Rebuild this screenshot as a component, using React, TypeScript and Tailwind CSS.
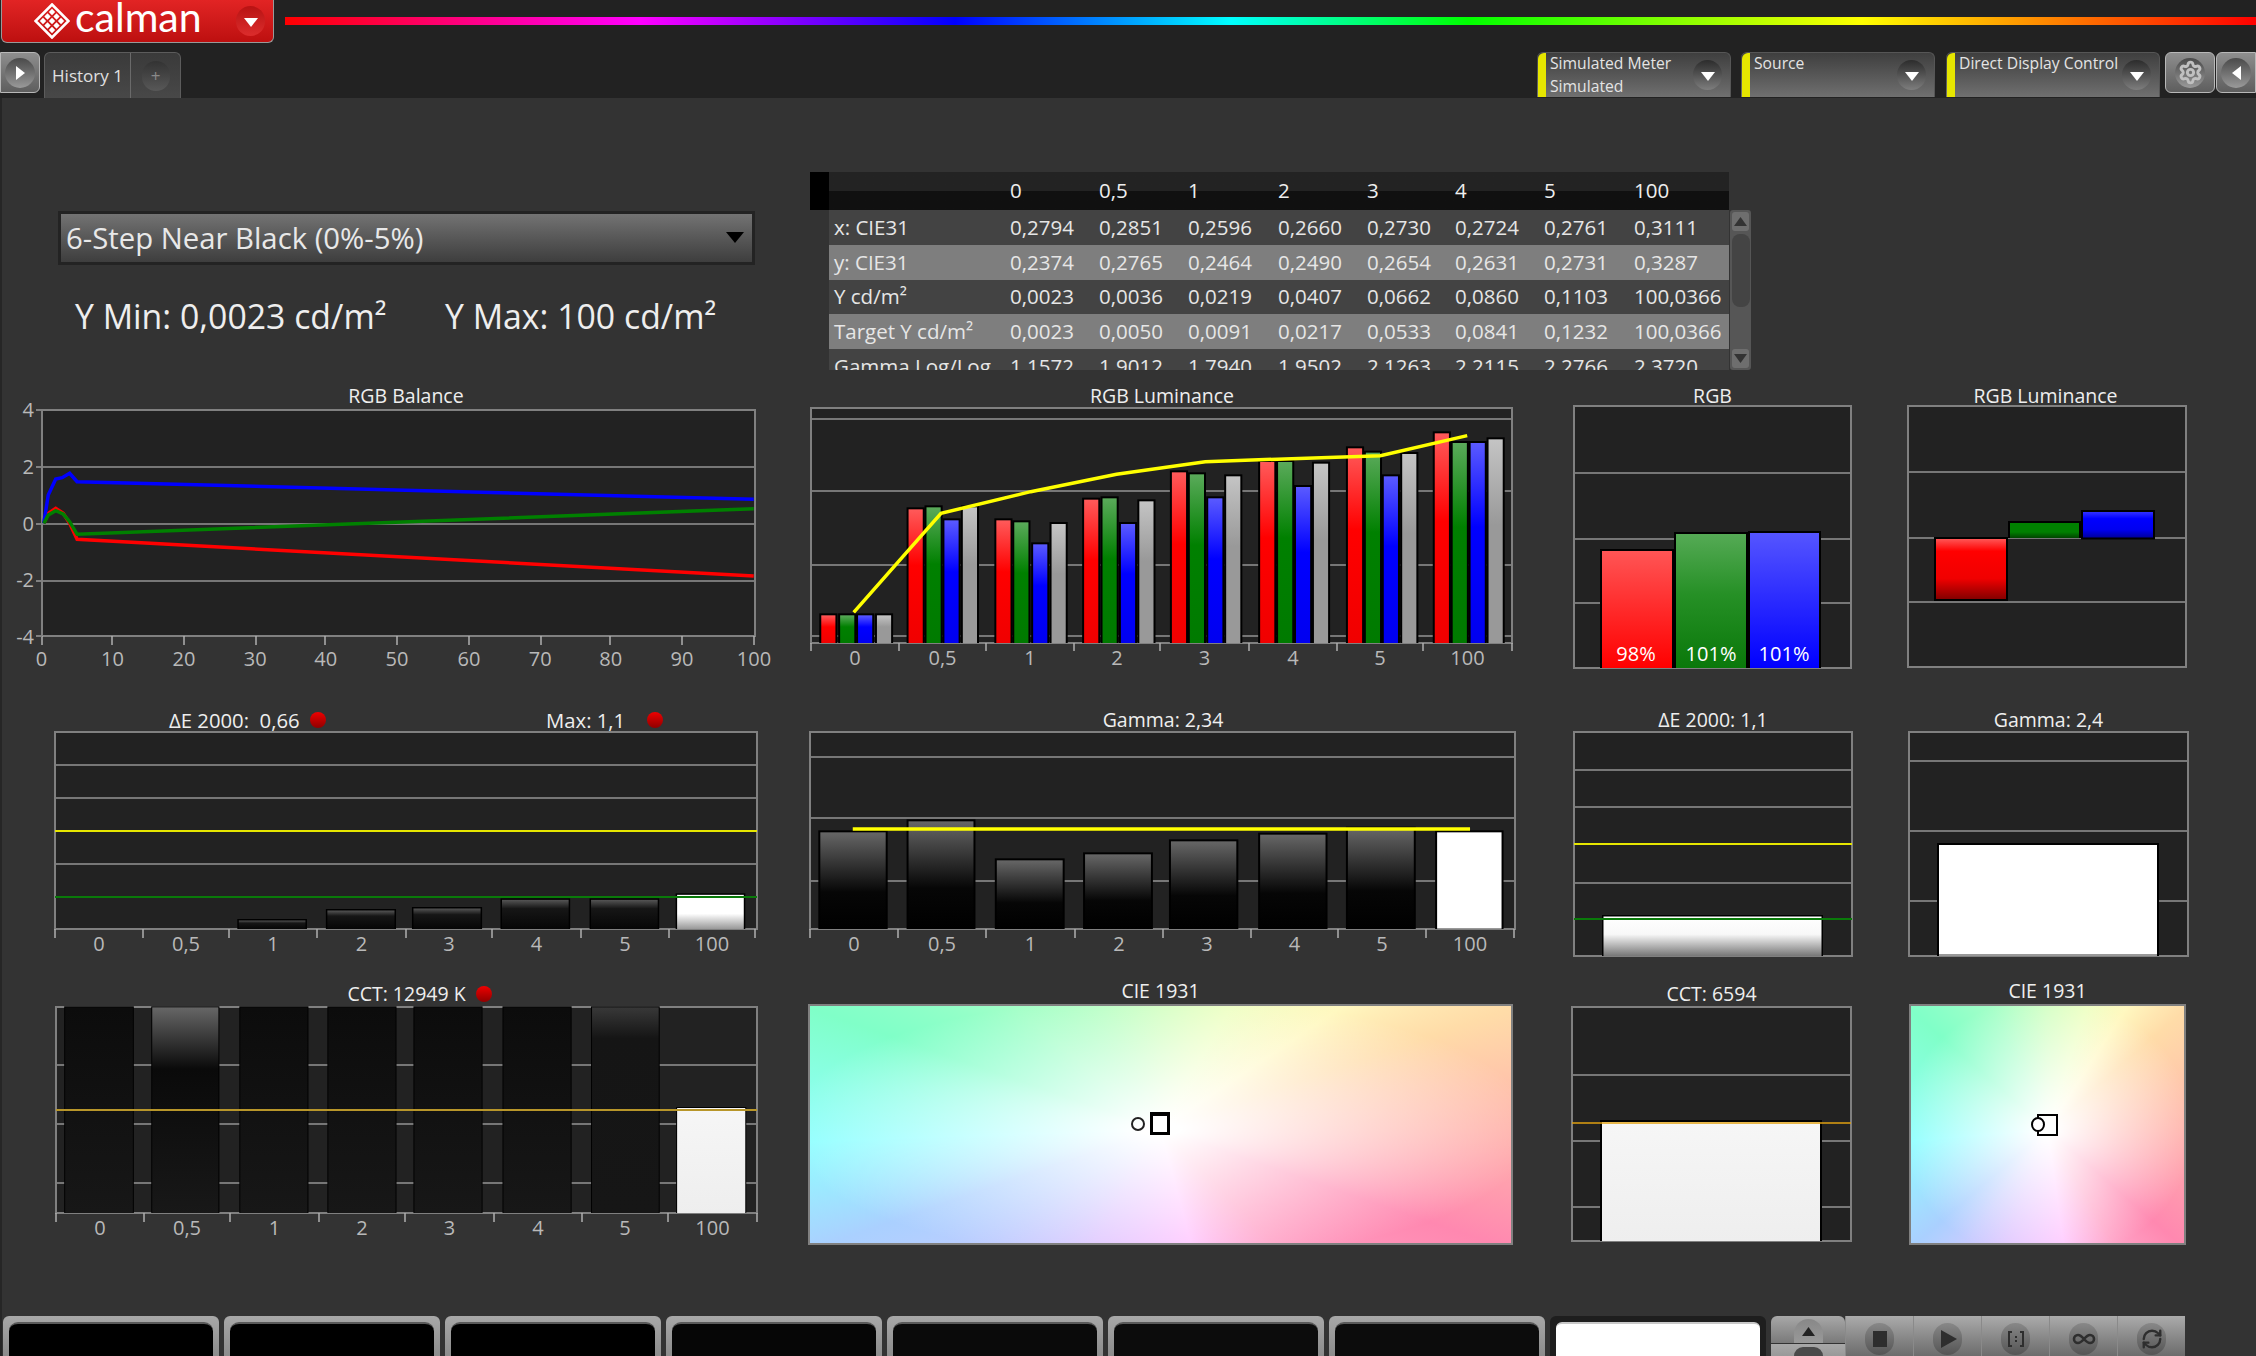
import React from "react";
import { Infinity as InfinityIcon, RefreshCw, Settings } from "lucide-react";

type Bar = [number, number, number, string];

const pts = (a: number[][]) => a.map((p) => p.join(",")).join(" ");

function Defs() {
  const g = (id: string, stops: [number, string][]) => (
    <linearGradient id={id} x1="0" y1="0" x2="0" y2="1" key={id}>
      {stops.map(([o, c], i) => (
        <stop key={i} offset={o} stopColor={c} />
      ))}
    </linearGradient>
  );
  return (
    <svg width="0" height="0" className="absolute">
      <defs>
        {g("r", [[0, "#ff5a5a"], [0.42, "#ff0000"], [1, "#f00000"]])}
        {g("g", [[0, "#5aaa5a"], [0.42, "#008000"], [1, "#007a00"]])}
        {g("b", [[0, "#5a5aff"], [0.42, "#0000ff"], [1, "#0000f0"]])}
        {g("w", [[0, "#c4c4c4"], [0.42, "#999999"], [1, "#999999"]])}
        {g("r3", [[0, "#ff5555"], [0.5, "#ff2a2a"], [1, "#ff0000"]])}
        {g("g3", [[0, "#55aa55"], [0.45, "#269026"], [1, "#0a780a"]])}
        {g("b3", [[0, "#5555ff"], [0.5, "#2a2aff"], [1, "#0000ff"]])}
        {g("rS", [[0, "#ff5555"], [0.2, "#ff0000"], [0.65, "#f00000"], [1, "#800000"]])}
        {g("gS", [[0, "#008000"], [0.6, "#008000"], [1, "#004400"]])}
        {g("bS", [[0, "#3030ff"], [0.25, "#0000ff"], [0.65, "#0000f0"], [1, "#000090"]])}
        {g("kA", [[0, "#555555"], [0.3, "#161616"], [1, "#060606"]])}
        {g("kB", [[0, "#666666"], [0.62, "#060606"], [1, "#000000"]])}
        {g("kC", [[0, "#0c0c0c"], [1, "#171717"]])}
        {g("kD", [[0, "#666666"], [0.3, "#0a0a0a"], [1, "#181818"]])}
        {g("kE", [[0, "#383838"], [0.15, "#151515"], [1, "#161616"]])}
        {g("wA", [[0, "#ffffff"], [0.55, "#ffffff"], [1, "#999999"]])}
        {g("wB", [[0, "#ffffff"], [0.45, "#f8f8f8"], [1, "#777777"]])}
        {g("wC", [[0, "#f6f6f6"], [1, "#eeeeee"]])}
        {g("wW", [[0, "#ffffff"], [0.985, "#ffffff"], [0.985, "#999999"], [1, "#999999"]])}
      </defs>
    </svg>
  );
}

function Frame({ x1, y1, x2, y2, grid = [], ticks = [], tb = 0 }: { x1: number; y1: number; x2: number; y2: number; grid?: number[]; ticks?: number[]; tb?: number }) {
  return (
    <g>
      <rect x={x1} y={y1} width={x2 - x1} height={y2 - y1} fill="#222222" />
      {grid.map((y) => (
        <line key={y} x1={x1} x2={x2} y1={y} y2={y} stroke="#777777" strokeWidth="2" />
      ))}
      <rect x={x1} y={y1} width={x2 - x1} height={y2 - y1} fill="none" stroke="#808080" strokeWidth="2" />
      {ticks.map((x) => (
        <line key={x} x1={x} x2={x} y1={y2} y2={tb} stroke="#b0b0b0" strokeWidth="1.5" />
      ))}
    </g>
  );
}

function Bars({ data, bottom, b = 2 }: { data: Bar[]; bottom: number; b?: number }) {
  return (
    <g>
      {data.map(([x1, x2, top, fill], i) => (
        <g key={i}>
          <rect x={x1} y={top} width={x2 - x1} height={bottom - top} fill="#000" />
          <rect x={x1 + b} y={top + b} width={x2 - x1 - 2 * b} height={Math.max(0, bottom - top - b)} fill={`url(#${fill})`} />
        </g>
      ))}
    </g>
  );
}

function Chart({
  title, x0, y0, w, h, ticks, labels, className = "", titleClass = "", labelClass = "-mt-[6px]", children,
}: {
  title: React.ReactNode; x0: number; y0: number; w: number; h: number; ticks?: number[]; labels?: string[];
  className?: string; titleClass?: string; labelClass?: string; children: React.ReactNode;
}) {
  const cells: { w: number; t: string }[] = [];
  let first = 0;
  if (ticks && labels) {
    if (ticks.length === labels.length + 1) {
      labels.forEach((t, i) => cells.push({ w: ticks[i + 1] - ticks[i], t }));
      first = ticks[0] - x0;
    } else {
      labels.forEach((t, i) => {
        const l = i === 0 ? ticks[0] - 36 : (ticks[i - 1] + ticks[i]) / 2;
        const r = i === labels.length - 1 ? ticks[i] + 36 : (ticks[i] + ticks[i + 1]) / 2;
        cells.push({ w: r - l, t });
      });
      first = ticks[0] - 36 - x0;
    }
  }
  return (
    <div className={`shrink-0 ${className}`} style={{ width: w }}>
      <div className={`flex items-center justify-center whitespace-pre text-[19.5px] leading-none text-[#eeeeee] ${titleClass}`}>{title}</div>
      <svg width={w} height={h} viewBox={`${x0} ${y0} ${w} ${h}`} className="block overflow-visible">
        {children}
      </svg>
      {cells.length > 0 && (
        <div className={`flex h-[24px] items-center text-[20px] leading-none text-[#b9b9b9] ${labelClass}`} style={{ marginLeft: first }}>
          {cells.map((c, i) => (
            <div key={i} className="flex shrink-0 justify-center" style={{ width: c.w }}>
              {c.t}
            </div>
          ))}
        </div>
      )}
    </div>
  );
}

const Tri = ({ className = "", dir = "down", color = "#fff" }: { className?: string; dir?: "down" | "up" | "left" | "right"; color?: string }) => {
  const p = { down: "0,0 14,0 7,9", up: "0,9 14,9 7,0", left: "14,0 14,14 0,7", right: "0,0 0,14 14,7" }[dir];
  const vb = dir === "down" || dir === "up" ? "0 0 14 9" : "0 0 14 14";
  return (
    <svg viewBox={vb} preserveAspectRatio="none" className={className}>
      <polygon points={p} fill={color} />
    </svg>
  );
};

const Knob = ({ className = "" }: { className?: string }) => (
  <div className={`flex h-[30px] w-[29px] shrink-0 items-center justify-center rounded-full bg-linear-to-b from-[#2c2c2c] to-[#7e7e7e] ${className}`}>
    <Tri className="mt-[2px] h-[9px] w-[14px]" />
  </div>
);

const Dot = ({ className = "" }: { className?: string }) => (
  <span className={`inline-block h-[16px] w-[16px] rounded-full bg-linear-to-b from-[#f00000] to-[#900000] ${className}`} />
);

function Logo() {
  const d = [[18, 9], [9, 18], [27, 18], [18, 27], [13.5, 13.5], [22.5, 13.5], [13.5, 22.5], [22.5, 22.5], [18, 18]];
  return (
    <svg viewBox="0 0 36 36" className="h-[36px] w-[36px] shrink-0">
      <polygon points="18,1.5 34.5,18 18,34.5 1.5,18" fill="none" stroke="#fff" strokeWidth="2.6" />
      {d.map(([x, y], i) => (
        <polygon key={i} points={`${x},${y - 3.2} ${x + 3.2},${y} ${x},${y + 3.2} ${x - 3.2},${y}`} fill="#fff" />
      ))}
    </svg>
  );
}

function InputBox({ l1, l2, className }: { l1: string; l2?: string; className: string }) {
  return (
    <div className={`flex h-[45px] shrink-0 overflow-hidden rounded-t-[6px] border-t border-r border-[#565656] bg-linear-to-b from-[#3f3f3f] to-[#707070] ${className}`}>
      <div className="ml-[1px] w-[8px] shrink-0 rounded-tl-[6px] bg-[#e6e600]" />
      <div className="-mt-[1px] flex min-w-0 flex-1 flex-col whitespace-nowrap pl-[4px] text-[15.7px] leading-[22.5px] text-[#e4e4e4]">
        <span>{l1}</span>
        {l2 && <span>{l2}</span>}
      </div>
      <Knob className="mt-[7px] mr-[8px]" />
    </div>
  );
}

const SideBtn = ({ className, children }: { className: string; children: React.ReactNode }) => (
  <div className={`flex h-[41px] shrink-0 items-center justify-center border border-[#b8b8b8] bg-linear-to-b from-[#8e8e8e] to-[#5e5e5e] ${className}`}>
    <div className="flex h-[30px] w-[30px] items-center justify-center rounded-full bg-linear-to-b from-[#4a4a4a] to-[#9a9a9a]">{children}</div>
  </div>
);

const head = ["0", "0,5", "1", "2", "3", "4", "5", "100"];
const rows: { l: string; v: string[]; light: boolean }[] = [
  { l: "x: CIE31", v: ["0,2794", "0,2851", "0,2596", "0,2660", "0,2730", "0,2724", "0,2761", "0,3111"], light: false },
  { l: "y: CIE31", v: ["0,2374", "0,2765", "0,2464", "0,2490", "0,2654", "0,2631", "0,2731", "0,3287"], light: true },
  { l: "Y cd/m²", v: ["0,0023", "0,0036", "0,0219", "0,0407", "0,0662", "0,0860", "0,1103", "100,0366"], light: false },
  { l: "Target Y cd/m²", v: ["0,0023", "0,0050", "0,0091", "0,0217", "0,0533", "0,0841", "0,1232", "100,0366"], light: true },
  { l: "Gamma Log/Log", v: ["1,1572", "1,9012", "1,7940", "1,9502", "2,1263", "2,2115", "2,2766", "2,3720"], light: false },
];
const tableCols = "grid grid-cols-[181px_89px_89px_90px_89px_88px_89px_90px_95px]";

function DataTable() {
  return (
    <div className="ml-[53px] mt-[74px] w-[941px] shrink-0">
      <div className="flex h-[38px] w-[919px]">
        <div className="w-[19px] shrink-0 bg-black" />
        <div className={`flex-1 items-center bg-linear-to-b from-[#232323] from-50% to-[#101010] to-50% pb-[1px] text-[20.5px] text-[#eeeeee] ${tableCols}`}>
          <span />
          {head.map((h) => (
            <span key={h}>{h}</span>
          ))}
        </div>
      </div>
      <div className="flex h-[160px]">
        <div className="ml-[19px] w-[900px] shrink-0 overflow-hidden">
          {rows.map((r) => (
            <div key={r.l} className={`h-[34.75px] items-center whitespace-nowrap pb-[1px] text-[20.5px] leading-[28px] text-[#e6e6e6] ${tableCols} ${r.light ? "bg-[#7e7e7e]" : "bg-[#434343]"}`}>
              <span className="pl-[5px]">{r.l}</span>
              {r.v.map((v, i) => (
                <span key={i}>{v}</span>
              ))}
            </div>
          ))}
        </div>
        <div className="ml-[1px] flex w-[21px] flex-col items-center rounded-[3px] bg-[#565656] py-[2px]">
          <div className="flex h-[19px] w-[17px] items-center justify-center rounded-[3px] bg-[#6e6e6e]">
            <Tri dir="up" color="#333" className="h-[9px] w-[13px]" />
          </div>
          <div className="mt-[3px] h-[73px] w-[18px] rounded-[8px] bg-[#444444]" />
          <div className="mt-auto flex h-[19px] w-[17px] items-center justify-center rounded-[3px] bg-[#6e6e6e]">
            <Tri dir="down" color="#333" className="h-[9px] w-[13px]" />
          </div>
        </div>
      </div>
    </div>
  );
}

const cieBig =
  "bg-[radial-gradient(ellipse_at_50%_52%,#ffffff_0%,#ffffff_4%,rgba(255,255,255,0)_76%),conic-gradient(from_0deg_at_50%_52%,#d4ffc4_0deg,#eeffc4_30deg,#fff8c0_56deg,#ffdca8_71deg,#ffb4ac_90deg,#ff88b0_109deg,#ffa4c8_135deg,#ffc8ff_165deg,#e0c8ff_210deg,#c8ccff_230deg,#aad0ff_251deg,#90ffff_268deg,#88ffe0_280deg,#80ffc8_289deg,#a4ffc8_310deg,#d4ffc4_360deg)]";
const cieSmall =
  "bg-[radial-gradient(ellipse_at_50%_52%,#ffffff_0%,#ffffff_4%,rgba(255,255,255,0)_76%),conic-gradient(from_0deg_at_50%_52%,#d4ffc4_0deg,#eeffc4_18deg,#fff8c0_33deg,#ffdca8_49deg,#ffb4ac_90deg,#ff88b0_131deg,#ffa4c8_150deg,#ffc8ff_172deg,#e0c8ff_200deg,#c8ccff_215deg,#aad0ff_229deg,#90ffff_265deg,#88ffe0_290deg,#80ffc8_311deg,#a4ffc8_335deg,#d4ffc4_360deg)]";

function Cie({ className, big }: { className: string; big: boolean }) {
  const w = big ? 705 : 277;
  const x0 = big ? 808 : 1909;
  return (
    <div className={`shrink-0 ${className}`}>
      <div className="flex h-[20px] items-center justify-center pb-[6px] text-[19.5px] leading-none text-[#eeeeee]">CIE 1931</div>
      <div className={`relative h-[241px] border-2 border-[#808080] ${big ? cieBig : cieSmall}`}>
        <svg width={w} height={241} viewBox={`${x0} 1005 ${w} 241`} className="absolute -left-[2px] -top-[2px]">
          {big ? (
            <g>
              <circle cx="1138" cy="1125" r="6" fill="none" stroke="#222" strokeWidth="2" />
              <rect x="1151.5" y="1114.5" width="17" height="20" fill="#fff" stroke="#000" strokeWidth="3" />
              <rect x="1150" y="1113" width="20" height="4" fill="#000" />
            </g>
          ) : (
            <g>
              <rect x="2038" y="1116" width="19" height="20" fill="none" stroke="#000" strokeWidth="2" />
              <ellipse cx="2038" cy="1125.5" rx="6" ry="6.5" fill="#fff" stroke="#000" strokeWidth="2" />
            </g>
          )}
        </svg>
      </div>
    </div>
  );
}

const TopTile = ({ fill }: { fill: string }) => (
  <div className="h-full w-[216px] shrink-0 rounded-t-[6px] bg-linear-to-b from-[#a8a8a8] to-[#8c8c8c] px-[6px] pt-[6px]">
    <div className={`h-full rounded-t-[9px] border-t-2 border-[#5a5a5a] ${fill}`} />
  </div>
);

const Ctl = ({ children }: { children: React.ReactNode }) => (
  <div className="flex h-full w-[68px] shrink-0 items-start justify-center border-l border-[#8a8a8a] bg-linear-to-b from-[#ababab] to-[#6c6c6c] pt-[7px]">
    <div className="flex h-[32px] w-[29px] items-center justify-center rounded-full bg-linear-to-b from-[#888888] to-[#555555]">{children}</div>
  </div>
);

export default function App() {
  // chart 1 coordinates, read from the reference
  const bx = (z: number) => z / 2.01;
  const by = (z: number) => 380 + z / 3;
  const line = (a: number[][]) => pts(a.map(([x, y]) => [bx(x), by(y)]));

  // chart 2
  const lx = (z: number) => 790 + z / 2.119;
  const lumGroups: [number, number][][] = [
    [[62, 700], [102, 700], [140, 700], [180, 700]],
    [[247, 382], [285, 376], [323, 415], [362, 376]],
    [[433, 415], [471, 421], [511, 487], [550, 426]],
    [[619, 353], [658, 349], [697, 426], [736, 358]],
    [[805, 271], [843, 277], [882, 349], [920, 283]],
    [[992, 240], [1030, 240], [1068, 315], [1106, 245]],
    [[1178, 199], [1216, 212], [1254, 283], [1293, 216]],
    [[1362, 154], [1400, 183], [1438, 183], [1476, 172]],
  ];
  const fills = ["r", "g", "b", "w"];
  const lumBars: Bar[] = lumGroups.flatMap((gr) =>
    gr.map(([x, t], i) => [lx(x), lx(x + 38.5), by(t), fills[i]] as Bar),
  );
  const lumLine = [[135, 697], [320, 400], [510, 335], [692, 283], [880, 245], [1063, 236], [1251, 227], [1435, 167]];

  const cols8 = ["0", "0,5", "1", "2", "3", "4", "5", "100"];

  // row 2, first chart
  const dy = (z: number) => 700 + z / 3;
  const deBars: Bar[] = [
    [477, 617, 657, "kA"],
    [655, 796, 627, "kA"],
    [828, 969, 621, "kA"],
    [1006, 1146, 595, "kA"],
    [1185, 1325, 595, "kA"],
    [1358, 1498, 580, "wA"],
  ].map(([a, b, t, f]) => [bx(a as number), bx(b as number), dy(t as number), f as string] as Bar);

  const gaBars: Bar[] = [
    [60, 207, 391, "kB"],
    [247, 393, 358, "kB"],
    [434, 582, 475, "kB"],
    [621, 769, 457, "kB"],
    [803, 950, 418, "kB"],
    [992, 1139, 398, "kB"],
    [1178, 1326, 380, "kB"],
    [1367, 1512, 391, "wW"],
  ].map(([a, b, t, f]) => [lx(a as number), lx(b as number), dy(t as number), f as string] as Bar);

  const cy = (z: number) => 970 + z / 3;
  const cctBars: Bar[] = [
    [129, 269, 112, "kC"],
    [304, 441, 112, "kD"],
    [481, 620, 112, "kC"],
    [658, 797, 112, "kC"],
    [831, 970, 112, "kC"],
    [1010, 1149, 112, "kC"],
    [1188, 1326, 112, "kE"],
    [1359, 1500, 414, "wC"],
  ].map(([a, b, t, f]) => [bx(a as number), bx(b as number), cy(t as number), f as string] as Bar);

  return (
    <div className="h-[1356px] w-[2256px] overflow-hidden bg-[#222222] font-['Open_Sans',sans-serif]">
      <Defs />
      {/* title bar */}
      <div className="flex h-[43px] items-start">
        <div className="ml-[1px] flex h-[43px] w-[273px] shrink-0 items-center rounded-b-[6px] border-b border-x border-[#999999] bg-linear-to-b from-[#e22424] to-[#bd0f0f] pl-[32px]">
          <Logo />
          <span className="mb-[10px] ml-[5px] w-[130px] shrink-0 font-['Lato',sans-serif] text-[41px] font-normal leading-none text-white">calman</span>
          <div className="ml-[31px] flex h-[30px] w-[29px] shrink-0 items-center justify-center rounded-full bg-linear-to-b from-[#b81212] to-[#dc2c2c]">
            <Tri className="mt-[2px] h-[9px] w-[14px]" />
          </div>
        </div>
        <div className="ml-[11px] mt-[17px] h-[8px] flex-1 bg-[linear-gradient(90deg,#ff0000_0%,#ff00ff_18%,#0000ff_34%,#00ffff_48%,#00ff00_60%,#ffff00_80%,#ff0000_100%)]" />
      </div>

      {/* tabs and inputs */}
      <div className="mt-[9px] flex h-[46px] items-start">
        <SideBtn className="w-[40px] rounded-r-[6px]">
          <Tri dir="right" className="h-[14px] w-[9px]" />
        </SideBtn>
        <div className="ml-[4px] flex h-[46px] w-[137px] shrink-0 overflow-hidden rounded-t-[6px] border-x border-t border-[#5c5c5c] bg-linear-to-b from-[#3a3a3a] to-[#484848]">
          <div className="flex w-[86px] shrink-0 items-center justify-center border-r border-[#6a6a6a] text-[17px] leading-none text-[#e0e0e0]">History 1</div>
          <div className="flex flex-1 items-center justify-center">
            <div className="flex h-[30px] w-[28px] items-center justify-center rounded-full bg-linear-to-b from-[#333333] to-[#585858] text-[17px] leading-none text-[#8a8a8a]">+</div>
          </div>
        </div>
        <div className="flex-1" />
        <InputBox l1="Simulated Meter" l2="Simulated" className="w-[194px]" />
        <InputBox l1="Source" className="ml-[10px] w-[194px]" />
        <InputBox l1="Direct Display Control" className="ml-[11px] w-[214px]" />
        <SideBtn className="ml-[5px] w-[50px] rounded-[6px]">
          <Settings size={25} color="#c0c0c0" strokeWidth={2.8} />
        </SideBtn>
        <SideBtn className="ml-[1px] w-[40px] rounded-l-[6px]">
          <Tri dir="left" className="h-[14px] w-[9px]" />
        </SideBtn>
      </div>

      {/* workspace */}
      <div className="mt-[0px] flex h-[1258px] flex-col bg-[#333333] text-[#eeeeee] shadow-[inset_2px_0_0_#262626]">
        {/* selector and table */}
        <div className="flex h-[287px] shrink-0 items-start">
          <div className="mt-[113px] w-[757px] shrink-0 pl-[58px]">
            <div className="flex h-[54px] w-[697px] items-center justify-between border-[3px] border-[#232323] bg-linear-to-b from-[#737373] to-[#3e3e3e] pl-[5px] pr-[8px] pt-[1px] text-[29.3px] leading-none text-[#e8e8e8]">
              <span>6-Step Near Black (0%-5%)</span>
              <Tri color="#000" className="mb-[3px] h-[11px] w-[18px]" />
            </div>
            <div className="mt-[30px] flex h-[44px] items-center text-[33.8px] leading-none text-[#eeeeee]">
              <span className="ml-[17px] w-[370px] whitespace-nowrap">Y Min: 0,0023 cd/m²</span>
              <span className="whitespace-nowrap">Y Max: 100 cd/m²</span>
            </div>
          </div>
          <DataTable />
        </div>

        {/* first row */}
        <div className="flex h-[324px] shrink-0 items-start">
          <div className="mt-[13px] flex h-[251px] w-[40px] shrink-0 flex-col justify-between pr-[6px] text-right text-[20px] leading-[24px] text-[#b9b9b9]">
            <span>4</span>
            <span>2</span>
            <span>0</span>
            <span>-2</span>
            <span>-4</span>
          </div>
          <Chart
            title="RGB Balance"
            titleClass="h-[21px] pl-[14px]"
            labelClass="mt-0"
            x0={40}
            y0={406}
            w={718}
            h={241}
            ticks={[42, 112, 184, 256, 325, 397, 469, 541, 610, 682, 754]}
            labels={["0", "10", "20", "30", "40", "50", "60", "70", "80", "90", "100"]}
          >
            <Frame x1={42} y1={410} x2={755} y2={636} grid={[467, 524, 581]} ticks={[42, 112, 184, 256, 325, 397, 469, 541, 610, 682, 754]} tb={645} />
            {[410, 467, 524, 581, 636].map((y) => (
              <line key={y} x1={36} x2={42} y1={y} y2={y} stroke="#808080" strokeWidth="2" />
            ))}
            <polyline fill="none" stroke="#ff0000" strokeWidth="3.5" points={line([[88, 430], [97, 400], [112, 385], [127, 400], [140, 430], [155, 478], [1515, 588]])} />
            <polyline fill="none" stroke="#0000ff" strokeWidth="3.5" points={line([[88, 430], [97, 345], [112, 297], [125, 293], [140, 280], [155, 305], [1515, 358]])} />
            <polyline fill="none" stroke="#008000" strokeWidth="3.5" points={line([[88, 430], [97, 405], [112, 392], [127, 402], [140, 425], [155, 463], [1515, 386]])} />
          </Chart>
          <Chart
            title="RGB Luminance"
            titleClass="h-[21px]"
            className="ml-[50px]"
            x0={808}
            y0={406}
            w={708}
            h={246}
            ticks={[811, 899, 986, 1074, 1160, 1249, 1337, 1423, 1512]}
            labels={cols8}
          >
            <Frame x1={811} y1={408} x2={1512} y2={643} grid={[419, 491, 565, 636]} ticks={[811, 899, 986, 1074, 1160, 1249, 1337, 1423, 1512]} tb={651} />
            <Bars data={lumBars} bottom={643} />
            <polyline fill="none" stroke="#ffff00" strokeWidth="3.5" points={pts(lumLine.map(([x, y]) => [lx(x), by(y)]))} />
          </Chart>
          <Chart title="RGB" titleClass="h-[21px]" className="ml-[56px]" x0={1572} y0={406} w={281} h={264}>
            <Frame x1={1574} y1={406} x2={1851} y2={668} grid={[473, 539, 603]} />
            <Bars data={[[1600, 1674, 549, "r3"], [1674, 1748, 532, "g3"], [1748, 1821, 531, "b3"]]} bottom={668} />
            <text x="1636" y="661" textAnchor="middle" fontSize="20" fill="#ffffff">98%</text>
            <text x="1711" y="661" textAnchor="middle" fontSize="20" fill="#ffffff">101%</text>
            <text x="1784" y="661" textAnchor="middle" fontSize="20" fill="#ffffff">101%</text>
          </Chart>
          <Chart title="RGB Luminance" titleClass="h-[21px] pr-[5px]" className="ml-[53px]" x0={1906} y0={406} w={284} h={263}>
            <Frame x1={1908} y1={406} x2={2186} y2={667} grid={[472, 538, 602]} />
            <Bars data={[[1934, 2008, 537, "rS"]]} bottom={600} />
            <Bars data={[[2008, 2081, 521, "gS"]]} bottom={538} />
            <Bars data={[[2081, 2155, 510, "bS"]]} bottom={539} />
            <rect x="1934" y="599" width="74" height="2" fill="#000" />
            <rect x="2081" y="537.5" width="74" height="2" fill="#000" />
          </Chart>
        </div>

        {/* second row */}
        <div className="flex h-[275px] shrink-0 items-start pl-[53px]">
          <Chart
            title={
              <div className="flex w-full items-center pl-[116px] text-[20.3px]">
                <span className="w-[141px]">ΔE 2000:  0,66</span>
                <Dot />
                <span className="ml-[220px] w-[101px]">Max: 1,1</span>
                <Dot />
              </div>
            }
            titleClass="h-[22px]"
            x0={53}
            y0={731}
            w={706}
            h={207}
            ticks={[55, 143, 229, 317, 406, 492, 581, 669, 755]}
            labels={cols8}
          >
            <Frame x1={55} y1={732} x2={757} y2={929} grid={[765, 798, 864]} ticks={[55, 143, 229, 317, 406, 492, 581, 669, 755]} tb={938} />
            <Bars data={deBars} bottom={929} b={1.5} />
            <line x1={55} x2={757} y1={831} y2={831} stroke="#e6e600" strokeWidth="2" />
            <line x1={55} x2={757} y1={897} y2={897} stroke="#0a7a0a" strokeWidth="2" />
          </Chart>
          <Chart
            title="Gamma: 2,34"
            titleClass="h-[22px]"
            className="ml-[49px]"
            x0={808}
            y0={731}
            w={710}
            h={207}
            ticks={[810, 898, 986, 1075, 1163, 1251, 1338, 1426, 1514]}
            labels={cols8}
          >
            <Frame x1={810} y1={732} x2={1515} y2={929} grid={[757, 818, 881]} ticks={[810, 898, 986, 1075, 1163, 1251, 1338, 1426, 1514]} tb={938} />
            <Bars data={gaBars} bottom={929} />
            <line x1={lx(133)} x2={lx(1441)} y1={829} y2={829} stroke="#ffff00" strokeWidth="3.5" />
          </Chart>
          <Chart title="ΔE 2000: 1,1" titleClass="h-[22px]" className="ml-[54px]" x0={1572} y0={731} w={282} h={227}>
            <Frame x1={1574} y1={732} x2={1852} y2={956} grid={[770, 807, 883]} />
            <Bars data={[[1602, 1823, 915, "wB"]]} bottom={956} b={1.5} />
            <line x1={1574} x2={1852} y1={844} y2={844} stroke="#e6e600" strokeWidth="2" />
            <line x1={1574} x2={1852} y1={919} y2={919} stroke="#0a7a0a" strokeWidth="2" />
          </Chart>
          <Chart title="Gamma: 2,4" titleClass="h-[22px]" className="ml-[53px]" x0={1907} y0={731} w={283} h={227}>
            <Frame x1={1909} y1={732} x2={2188} y2={956} grid={[761, 831, 901]} />
            <Bars data={[[1937, 2159, 843, "wW"]]} bottom={956} />
          </Chart>
        </div>

        {/* third row */}
        <div className="flex shrink-0 items-start pl-[54px]">
          <Chart
            title={
              <div className="flex items-center">
                <span>CCT: 12949 K</span>
                <Dot className="ml-[10px]" />
              </div>
            }
            titleClass="h-[20px] pl-[26px]"
            x0={54}
            y0={1005}
            w={705}
            h={218}
            ticks={[56, 144, 230, 319, 405, 494, 582, 668, 757]}
            labels={cols8}
          >
            <Frame x1={56} y1={1008} x2={757} y2={1214} grid={[1066, 1125, 1184]} ticks={[56, 144, 230, 319, 405, 494, 582, 668, 757]} tb={1223} />
            <Bars data={cctBars} bottom={1214} b={1} />
            <line x1={56} x2={757} y1={1111} y2={1111} stroke="#b8962a" strokeWidth="2" />
          </Chart>
          <Cie big className="ml-[49px] w-[705px]" />
          <Chart title="CCT: 6594" titleClass="h-[20px]" className="ml-[57px]" x0={1570} y0={1005} w={283} h={240}>
            <Frame x1={1572} y1={1008} x2={1851} y2={1242} grid={[1076, 1142, 1208]} />
            <Bars data={[[1600, 1822, 1121, "wC"]]} bottom={1242} />
            <line x1={1572} x2={1851} y1={1124} y2={1124} stroke="#e0a010" strokeWidth="1.5" />
          </Chart>
          <Cie big={false} className="ml-[56px] w-[277px]" />
        </div>

        {/* filmstrip and transport */}
        <div className="mt-auto flex h-[40px] shrink-0 items-stretch gap-[5px] overflow-hidden pl-[3px]">
          <TopTile fill="bg-[#000000]" />
          <TopTile fill="bg-[#000000]" />
          <TopTile fill="bg-[#000000]" />
          <TopTile fill="bg-[#060606]" />
          <TopTile fill="bg-[#0a0a0a]" />
          <TopTile fill="bg-[#0c0c0c]" />
          <TopTile fill="bg-[#0c0c0c]" />
          <div className="h-full w-[216px] shrink-0 rounded-t-[6px] bg-[#1e1e1e] px-[6px] pt-[6px]">
            <div className="h-full rounded-t-[6px] border-t-2 border-[#c8c8c8] bg-white" />
          </div>
          <div className="flex shrink-0">
            <div className="w-[74px] shrink-0">
              <div className="flex h-[27px] items-start justify-center rounded-t-[6px] bg-linear-to-b from-[#a8a8a8] to-[#7a7a7a] pt-[3px]">
                <div className="flex h-[24px] w-[29px] items-center justify-center rounded-t-full bg-linear-to-b from-[#888888] to-[#999999]">
                  <Tri dir="up" color="#222" className="h-[9px] w-[13px]" />
                </div>
              </div>
              <div className="mt-[1px] flex h-[12px] items-start justify-center bg-linear-to-b from-[#a8a8a8] to-[#999999] pt-[3px]">
                <div className="h-[9px] w-[29px] rounded-t-full bg-[#4a4a4a]" />
              </div>
            </div>
            <Ctl>
              <div className="h-[16px] w-[14px] bg-[#2e2e2e]" />
            </Ctl>
            <Ctl>
              <Tri dir="right" color="#2e2e2e" className="ml-[2px] h-[18px] w-[16px]" />
            </Ctl>
            <Ctl>
              <svg viewBox="0 0 18 18" className="h-[18px] w-[18px]" fill="none" stroke="#2e2e2e" strokeWidth="2">
                <path d="M5 2H2v14h3M13 2h3v14h-3" />
                <path d="M9 6v2M9 10v2" />
              </svg>
            </Ctl>
            <Ctl>
              <InfinityIcon size={24} color="#2e2e2e" strokeWidth={2.6} />
            </Ctl>
            <Ctl>
              <RefreshCw size={22} color="#2e2e2e" strokeWidth={2.6} />
            </Ctl>
          </div>
        </div>
      </div>
    </div>
  );
}
